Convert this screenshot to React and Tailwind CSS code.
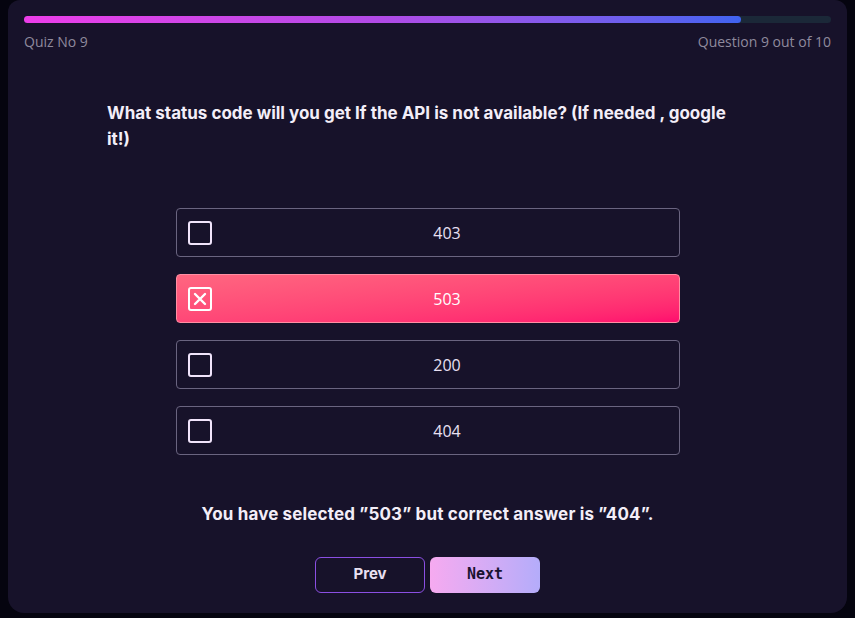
import { useState } from "react";

const options = ["403", "503", "200", "404"];

function Checkbox({ checked }) {
    return (
        <div className={"flex h-6 w-6 shrink-0 items-center justify-center rounded-[3px] border-2 " + (checked ? "border-white" : "border-[#f1e4fb]")}>
            {checked && (
                <svg width="14" height="14" viewBox="0 0 14 14">
                    <path d="M2 2 L12 12 M12 2 L2 12" stroke="#ffffff" strokeWidth="2.4" strokeLinecap="round" />
                </svg>
            )}
        </div>
    );
}

export default function App() {
    const [selected, setSelected] = useState("503");
    return (
        <div className="min-h-[618px] w-full bg-[#05040f] px-2 pb-[5px]" style={{ fontFamily: "Inter, 'Open Sans', sans-serif" }}>
            <div className="flex h-[613px] flex-col rounded-b-2xl rounded-t-xl bg-[#17122a] px-4 pt-4">
                <div className="h-[7px] w-full rounded-full bg-[#1b2838]">
                    <div className="h-full w-[88.9%] rounded-full bg-gradient-to-r from-[#ec3de8] via-[#b04ae6] to-[#3f63f0]" />
                </div>
                <div className="mt-[8px] flex justify-between text-[14px] text-[#8f8a9d]" style={{ fontFamily: "'Open Sans', sans-serif" }}>
                    <span>Quiz No 9</span>
                    <span>Question 9 out of 10</span>
                </div>

                <p className="mt-[48px] ml-[83px] w-[626px] text-[17px] font-bold leading-[26px] text-[#f3eef8]">
                    What status code will you get If the API is not available? (If needed , google it!)
                </p>

                <div className="mx-auto mt-[56px] flex w-[504px] flex-col gap-[17px]">
                    {options.map((o) => {
                        const active = o === selected;
                        return (
                            <button
                                key={o}
                                onClick={() => setSelected(o)}
                                className={
                                    "flex h-[49px] items-center rounded-[4px] border pl-[11px] " +
                                    (active
                                        ? "border-[#ff8fa3] bg-gradient-to-br from-[#ff6680] to-[#ff0a6e]"
                                        : "border-[#6a6480] bg-[#17122a]")
                                }
                            >
                                <Checkbox checked={active} />
                                <span className={"ml-[4px] flex-1 text-center text-[16px] " + (active ? "text-white" : "text-[#e9e0f2]")} style={{ fontFamily: "'Open Sans', sans-serif" }}>
                                    {o}
                                </span>
                            </button>
                        );
                    })}
                </div>

                <p className="mt-[47px] text-center text-[17px] font-bold tracking-[0.15px] text-[#f3eef8]">
                    You have selected ”503” but correct answer is ”404”.
                </p>

                <div className="mt-[29px] flex justify-center gap-[5px]">
                    <button className="h-[36px] w-[110px] rounded-md border border-[#8b4fe3] text-[15px] font-bold text-[#e9e0f2]">Prev</button>
                    <button className="h-[36px] w-[110px] rounded-md bg-gradient-to-r from-[#f6aaf0] to-[#b4acfa] text-[15px] font-bold text-[#1a1430]" style={{ fontFamily: "'DejaVu Sans Mono', monospace" }}>Next</button>
                </div>
            </div>
        </div>
    );
}
